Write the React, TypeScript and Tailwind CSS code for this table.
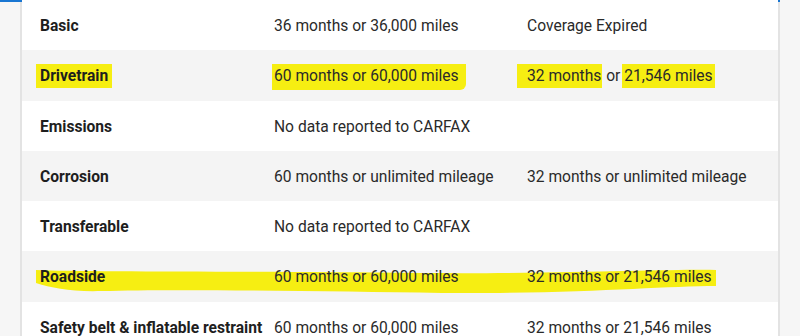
import React from 'react';

type Row = {
  label: string;
  term: React.ReactNode;
  remaining: React.ReactNode;
  marked?: 'spans' | 'stroke';
};

const Mark = ({ children, className = '' }: { children: React.ReactNode; className?: string }) => (
  <span className={`bg-[#f6ee12] py-[3px] ${className}`}>{children}</span>
);

const rows: Row[] = [
  { label: 'Basic', term: '36 months or 36,000 miles', remaining: 'Coverage Expired' },
  {
    label: 'Drivetrain',
    term: <Mark className="-ml-[2px] pl-[2px] pr-[7px] pb-[5px] rounded-br-[6px]">60 months or 60,000 miles</Mark>,
    remaining: (
      <>
        <Mark className="-ml-[10px] pl-[10px] pr-[1px]">32 months</Mark> or{' '}
        <Mark className="-ml-[2px] pl-[2px] pr-[2px]">21,546 miles</Mark>
      </>
    ),
    marked: 'spans',
  },
  { label: 'Emissions', term: 'No data reported to CARFAX', remaining: '' },
  { label: 'Corrosion', term: '60 months or unlimited mileage', remaining: '32 months or unlimited mileage' },
  { label: 'Transferable', term: 'No data reported to CARFAX', remaining: '' },
  { label: 'Roadside', term: '60 months or 60,000 miles', remaining: '32 months or 21,546 miles', marked: 'stroke' },
  { label: 'Safety belt & inflatable restraint', term: '60 months or 60,000 miles', remaining: '32 months or 21,546 miles' },
];

function RoadsideStroke() {
  // hand-drawn highlighter stroke across the whole row
  return (
    <svg className="absolute left-0 top-0 pointer-events-none" width="758" height="50" viewBox="0 0 758 50">
      <path
        d="M14 19 C60 21 200 20 400 22 C550 23 650 18 694 19 L694 35 C640 35 560 43 420 42 C300 40 150 38 80 40 C50 41 30 37 14 32 Z"
        fill="#f6ee12"
      />
    </svg>
  );
}

export default function App() {
  return (
    <div className="w-[800px] h-[336px] overflow-hidden bg-[#f6f6f6] font-['Roboto',sans-serif] text-[15.6px] relative">
      <div className="absolute top-0 left-0 w-[780px] h-[2px] bg-[#1976d2]" />
      <div className="flex h-full">
        <div className="w-[20px] shrink-0" />
        <div className="w-[760px] shrink-0 bg-white border-x-2 border-[#e3e3e3]">
          {rows.map((r, i) => (
            <div
              key={r.label}
              className={`relative h-[50.3px] flex items-center pl-[18px] pt-[3px] ${i % 2 === 1 ? 'bg-[#f4f4f4]' : 'bg-white'}`}
            >
              {r.marked === 'stroke' && <RoadsideStroke />}
              <div className="relative w-[234px] shrink-0 font-bold text-[#1e1e1e] whitespace-nowrap">
                {r.marked === 'spans' ? (
                  <Mark className="-ml-[4px] pl-[4px] pr-[4px] -mr-[4px]">{r.label}</Mark>
                ) : (
                  r.label
                )}
              </div>
              <div className="relative w-[253px] shrink-0 text-[#2a2a2a] whitespace-nowrap">{r.term}</div>
              <div className="relative text-[#2a2a2a] whitespace-nowrap">{r.remaining}</div>
            </div>
          ))}
        </div>
      </div>
    </div>
  );
}
